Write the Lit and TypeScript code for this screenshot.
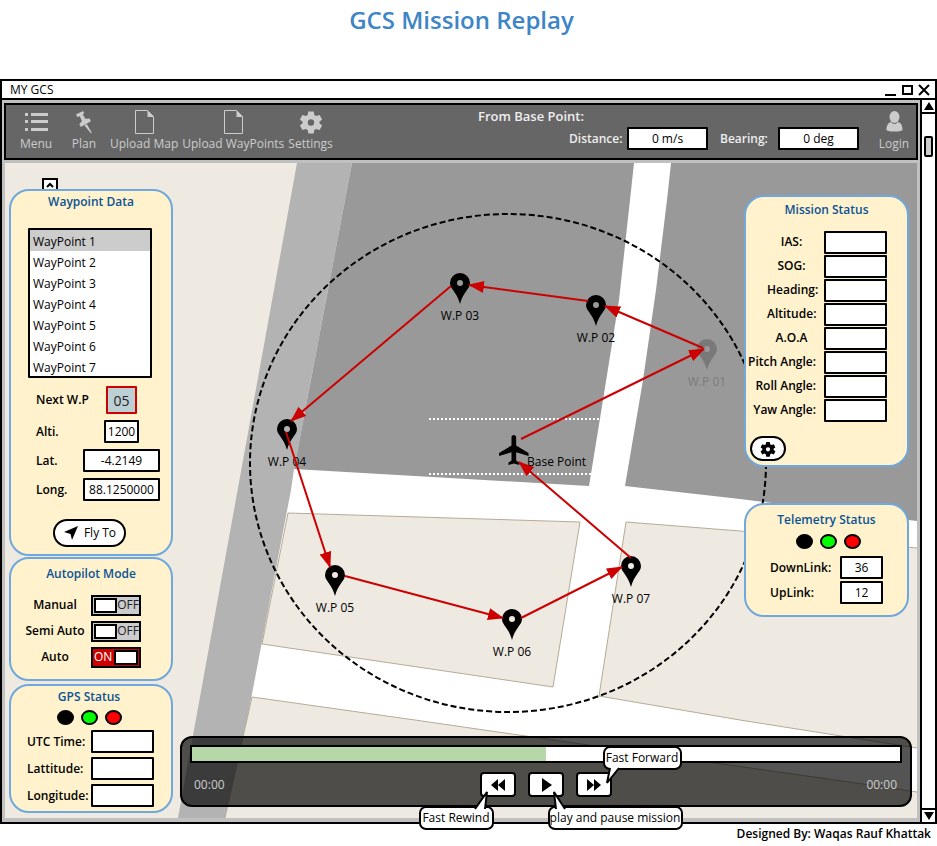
import { LitElement, html, svg, css } from "lit";
import { customElement, state } from "lit/decorators.js";
import { styleMap } from "lit/directives/style-map.js";

const GEAR =
  "M9.300 1.500h5.400l.6 3.500 1.900 1.100 3.400-1.200 2.500 4.500-2.700 2.300v1.600l2.700 2.300-2.500 4.500-3.400-1.200-1.900 1.100-.6 3.500H9.300L8.700 20l-1.900-1.100-3.400 1.200L.9 15.600l2.700-2.300v-1.600L.9 9.400l2.500-4.500 3.400 1.200L8.700 5zM12 9.300a3.200 3.200 0 1 0 0 6.400 3.200 3.200 0 0 0 0-6.400z";

const icon = (name: string) => {
  switch (name) {
    case "menu":
      return svg`<path fill="currentColor" d="M1 3h3v3H1zM7 3h17v3H7zM1 10h3v3H1zM7 10h17v3H7zM1 18h3v3H1zM7 18h17v3H7z"/>`;
    case "pin":
      return svg`<path fill="currentColor" d="M4 4.500 11 1l1.200 2.200-1.400 1.400 2.600 4.200 4-.2 1.600 2.600-5 2.800-5.200 3-1.500-2.800 2.600-3.300L7.800 6.200 5.300 7zM12.500 15.500l2.200-1.400 5 8.500-.6.8z"/>`;
    case "file":
      return svg`<path fill="none" stroke="currentColor" d="M3.500.5h12l6 6v17h-18z"/><path fill="currentColor" d="M15.500.5 22 7h-6.500z"/>`;
    case "gear":
      return svg`<path fill="currentColor" fill-rule="evenodd" d=${GEAR}/>`;
    default:
      return svg`<ellipse cx="12.500" cy="7" rx="5" ry="6" fill="currentColor"/><path fill="currentColor" d="M4.500 20c0-4 1-7 4.500-8 2 2.500 5 2.500 7 0 3.500 1 4.500 4 4.500 8-2 2-14 2-16 0z"/>`;
  }
};

const TOOLS = [
  ["menu", "Menu"],
  ["pin", "Plan"],
  ["file", "Upload Map"],
  ["file", "Upload WayPoints"],
  ["gear", "Settings"],
];

const PINS: [number, number, string][] = [
  [707, 349, "W.P 01"],
  [596, 305, "W.P 02"],
  [460, 283, "W.P 03"],
  [287, 429, "W.P 04"],
  [335, 575, "W.P 05"],
  [512, 619, "W.P 06"],
  [631, 566, "W.P 07"],
];

const LEGS = [
  "M521 439 704 349",
  "M703 348 605 306",
  "M588 301 469 285",
  "M451 286 291 421",
  "M286 432 330 567",
  "M345 576 503 618",
  "M521 618 622 567",
  "M631 558 519 462",
];

const MISSION: [string, boolean][] = [
  ["IAS:", false],
  ["SOG:", false],
  ["Heading:", false],
  ["Altitude:", false],
  ["A.O.A", false],
  ["Pitch Angle:", true],
  ["Roll Angle:", true],
  ["Yaw Angle:", true],
];

@customElement("app-root")
export class AppRoot extends LitElement {
  @state() private modes = [
    { name: "Manual", on: false },
    { name: "Semi Auto", on: false },
    { name: "Auto", on: true },
  ];
  @state() private progress = 50;

  static styles = css`
    :host {
      display: block;
      background: #fff;
      color: #000;
      font: 12px/16px "Open Sans", "Noto Sans", sans-serif;
    }
    * {
      box-sizing: border-box;
    }
    button,
    input,
    select {
      font: inherit;
      color: inherit;
      margin: 0;
      padding: 0;
    }
    button {
      cursor: pointer;
    }
    svg {
      display: block;
    }
    h1 {
      margin: 0;
      padding: 4px 14px 0 0;
      height: 79px;
      font-size: 24px;
      line-height: 32px;
      font-weight: 600;
      text-align: center;
      color: #3d85c6;
    }
    .window {
      border: 2px solid #000;
    }
    .titlebar {
      display: flex;
      justify-content: space-between;
      align-items: center;
      height: 19px;
      padding: 0 4px 0 8px;
      border-bottom: 2px solid #000;
    }
    .winbtns {
      display: flex;
      gap: 4px;
    }
    .winbtns button {
      width: 13px;
      height: 15px;
      border: 0;
      background: none;
    }
    .frame {
      display: flex;
      background: #c0c0c0;
    }
    .content {
      flex: 1;
      min-width: 0;
      padding: 3px 2px 4px;
    }
    .scroll {
      width: 15px;
      display: flex;
      flex-direction: column;
      background: #fff;
      border-left: 2px solid #000;
    }
    .scroll button {
      height: 14px;
      border: 0 solid #000;
      background: #fff;
      display: grid;
      place-items: center;
    }
    .scroll .up {
      border-bottom-width: 2px;
    }
    .scroll .down {
      border-top-width: 2px;
    }
    .track {
      flex: 1;
      padding: 22px 2px 0;
    }
    .thumb {
      height: 21px;
      border: 2px solid #000;
      border-radius: 2px;
      background: #ccc;
    }
    .toolbar {
      display: flex;
      height: 57px;
      background: #666;
      border: 2px solid #000;
      color: #ccc;
      padding: 0 0 0 8px;
    }
    .tool {
      display: flex;
      flex-direction: column;
      align-items: center;
      gap: 2px;
      min-width: 44px;
      margin-right: 4px;
      padding: 5px 0 0;
      border: 0;
      background: none;
      white-space: nowrap;
    }
    .tools {
      display: flex;
    }
    .base {
      margin: 2px 0 0 auto;
      font-weight: 600;
      color: #eee;
    }
    .base-title {
      font-size: 13px;
      line-height: 18px;
    }
    .readouts {
      display: flex;
      gap: 12px;
      padding: 2px 0 0 91px;
    }
    .readouts label {
      display: flex;
      align-items: center;
      justify-content: space-between;
      width: 139px;
    }
    .login {
      margin: 0 0 0 13px;
    }
    .field {
      height: 23px;
      width: 63px;
      border: 2px solid #000;
      border-radius: 1px;
      background: #fff;
      color: #000;
      text-align: center;
      font-weight: 400;
    }
    .w81 {
      width: 81px;
    }
    .w77 {
      width: 77px;
    }
    .w43 {
      width: 43px;
    }
    .w35 {
      width: 35px;
    }
    .next {
      width: 31px;
      height: 28px;
      border-color: #c00;
      background: #bccfd4;
      color: #222;
      font-size: 14px;
    }
    .map {
      position: relative;
      margin: 3px 1px 0;
      display: grid;
      grid-template-columns: 164px minmax(0, 1fr) 165px;
      grid-template-rows: 1fr auto;
      column-gap: 7px;
      padding: 15px 5px 5px 4px;
    }
    .canvas {
      position: absolute;
      inset: 0;
      width: 100%;
      height: 100%;
    }
    .left {
      grid-row: 1 / 3;
      position: relative;
    }
    .right {
      grid-column: 3;
      position: relative;
      margin: 17px 3px 0 -3px;
    }
    .collapse {
      display: block;
      width: 16px;
      height: 13px;
      margin: 0 0 -2px 33px;
      border: 2px solid #000;
      background: #fff;
    }
    .panel {
      position: relative;
      background: #fff2cc;
      border: 2px solid #6fa8dc;
      border-radius: 20px;
      padding: 3px 0 0;
      font-weight: 600;
    }
    h2 {
      margin: 0;
      font-size: 12px;
      line-height: 16px;
      font-weight: 600;
      text-align: center;
      color: #0b5394;
    }
    .waypoints {
      height: 367px;
    }
    .list {
      display: block;
      width: 124px;
      height: 150px;
      margin: 18px 0 8px 17px;
      border: 2px solid #000;
      border-radius: 1px;
      background: #fff;
      outline: none;
      overflow: hidden;
      font-weight: 400;
    }
    .list option {
      height: 21px;
      min-height: 0;
      padding: 3px 3px 0;
      color: #000;
    }
    .list option:checked {
      background: #ccc linear-gradient(#ccc, #ccc);
      color: #000;
    }
    .row {
      display: grid;
      grid-template-columns: 47px 77px;
      align-items: center;
      margin: 0 0 6px 25px;
      white-space: nowrap;
    }
    .row .field {
      justify-self: center;
    }
    .pill {
      display: flex;
      align-items: center;
      justify-content: center;
      border: 2px solid #000;
      border-radius: 14px;
      background: #fff;
      font-weight: 400;
    }
    .fly {
      width: 73px;
      height: 28px;
      gap: 5px;
      margin: 18px 0 0 42px;
    }
    .autopilot {
      margin-top: 1px;
      height: 124px;
      padding-top: 7px;
    }
    .gps {
      margin-top: 3px;
      height: 129px;
    }
    .mode {
      display: flex;
      align-items: center;
      height: 26px;
      margin-left: 12px;
    }
    .autopilot h2 {
      margin-bottom: 10px;
    }
    .mode-name {
      width: 68px;
      padding-right: 4px;
      display: flex;
      justify-content: center;
      white-space: nowrap;
    }
    .switch {
      position: relative;
      display: flex;
      align-items: center;
      justify-content: space-between;
      width: 50px;
      height: 21px;
      padding: 0 0 0 1px;
      border: 2px solid #000;
      background: #ccc;
      color: #20202a;
      font-weight: 400;
    }
    .switch input {
      position: absolute;
      inset: 0;
      width: 100%;
      height: 100%;
      opacity: 0;
    }
    .knob {
      width: 24px;
      height: 15px;
      border: 2px solid #000;
      background: #fff;
    }
    .switch.on {
      flex-direction: row-reverse;
      background: #c00;
      color: #fff;
      padding: 0 1px;
    }
    .lights {
      display: flex;
      justify-content: center;
      gap: 7px;
      margin: 5px 0;
    }
    .gps h2,
    .gps .lights {
      padding-right: 4px;
    }
    .light {
      width: 17px;
      height: 15px;
      border: 2px solid #000;
      border-radius: 50%;
      background: #000;
    }
    .green {
      background: #0f0;
    }
    .red {
      background: #f00;
    }
    .gpsrow {
      display: grid;
      grid-template-columns: 64px 63px;
      align-items: center;
      margin: 0 0 4px 16px;
      white-space: nowrap;
    }
    .mission {
      height: 272px;
      padding-top: 5px;
    }
    .mission h2 {
      margin-bottom: 12px;
    }
    .mrow {
      display: grid;
      grid-template-columns: 70px 63px;
      column-gap: 8px;
      align-items: center;
      height: 24px;
      white-space: nowrap;
    }
    .mrow .cap {
      text-align: center;
      padding-left: 21px;
    }
    .mrow .wide {
      display: flex;
      justify-content: flex-end;
      padding: 0;
    }
    .opts {
      width: 36px;
      height: 25px;
      margin: 14px 0 0 4px;
    }
    .telemetry {
      margin-top: 36px;
      height: 114px;
      padding-top: 7px;
    }
    .trow {
      display: grid;
      grid-template-columns: 70px 43px;
      align-items: center;
      margin: 0 0 2px 24px;
    }
    .telemetry .lights {
      margin: 6px 0 7px;
      padding-left: 4px;
    }
    .player {
      position: relative;
      grid-column: 2 / 4;
      margin: 0 0 6px;
      height: 71px;
      padding: 7px 8px;
      border: 2px solid #000;
      border-radius: 12px;
      background: rgba(0, 0, 0, 0.67);
      color: #ccc;
    }
    .bar {
      height: 18px;
      border: 2px solid #000;
      background: #fff;
    }
    .done {
      height: 100%;
      background: #b6d7a8;
    }
    .controls {
      display: grid;
      grid-template-columns: 1fr auto 1fr;
      align-items: center;
      margin-top: 9px;
      padding: 0 5px 0 4px;
    }
    .controls time:last-child {
      text-align: right;
    }
    .btns {
      display: flex;
      gap: 12px;
    }
    .ctl {
      position: relative;
      width: 36px;
      height: 25px;
      display: grid;
      place-items: center;
      border: 2px solid #000;
      border-radius: 4px;
      background: #fff;
      color: #000;
    }
    .tip {
      position: absolute;
      z-index: 1;
      height: 24px;
      line-height: 20px;
      border: 2px solid #000;
      border-radius: 7px;
      background: #fff;
      white-space: nowrap;
      text-align: center;
    }
    .tail {
      position: absolute;
      overflow: visible;
    }
    .tip-rw {
      width: 75px;
      top: 32px;
      left: -63px;
    }
    .tip-rw .tail {
      left: 53px;
      top: -19px;
    }
    .tip-play {
      width: 135px;
      top: 32px;
      left: 18px;
    }
    .tip-play .tail {
      left: 2px;
      top: -19px;
    }
    .tip-ff {
      width: 79px;
      top: -28px;
      left: 25px;
    }
    .tip-ff .tail {
      left: 1px;
      top: 20px;
    }
    footer {
      padding: 2px 6px 0;
      text-align: right;
      font-weight: 600;
    }
    .label {
      font-size: 12px;
      text-anchor: middle;
    }
    .start {
      text-anchor: start;
    }
  `;

  private toggle(i: number) {
    this.modes = this.modes.map((m, n) => (n === i ? { ...m, on: !m.on } : m));
  }

  private renderMap() {
    return html`<svg class="canvas" viewBox="5 163 912 655" preserveAspectRatio="xMidYMid slice" role="img" aria-label="Mission map">
      <defs>
        <marker id="head" markerUnits="userSpaceOnUse" markerWidth="18" markerHeight="14" refX="15" refY="6" orient="auto">
          <path d="M0 0 16 6 0 12z" fill="#c00" />
        </marker>
      </defs>
      <rect x="-400" y="0" width="1800" height="1000" fill="#eee9e1" />
      <path fill="#fff" d="M352 163H1400V818H225z" />
      <path fill="#b3b3b3" d="M297 163H352L294 469 291 490 247 720 225 818H178L240 477z" />
      <path fill="#999" d="M352 163H634L630 200 619 300 603 400 589 486 294 469z" />
      <path fill="#999" d="M671 163H1400V578L917 521 740 499 625 486 643 380 656 290 667 200z" />
      <g fill="#eee9e1" stroke="#b8aa98">
        <path d="M288 513 580 522 553 687 262 644z" />
        <path d="M626 522 740 531 917 548 1400 594V826L917 748 740 720 599 696z" />
        <path d="M252 697 415 720 560 741 870 785 917 792 1400 860V1000H225V818z" />
      </g>
      <path d="M429 419H603M429 474H603" stroke="#fff" stroke-width="2" stroke-dasharray="2 2" />
      <ellipse cx="508" cy="463" rx="258" ry="249" fill="none" stroke="#000" stroke-width="2" stroke-dasharray="6 3" />
      ${PINS.map(
        ([x, y, name], i) => svg`<g transform="translate(${x} ${y})" opacity=${i === 0 ? 0.2 : 1}>
          <path fill-rule="evenodd" d="M0-10A10 10 0 0 1 10 0C10 6 3 9 0 21-3 9-10 6-10 0A10 10 0 0 1 0-10zM0-3A3 3 0 0 0 0 3 3 3 0 0 0 0-3z"/>
          <text class="label" y="37">${name}</text>
        </g>`,
      )}
      <path
        transform="translate(496 432) scale(1.55 1.5)"
        d="M21 16v-2l-8-5V3.500c0-.83-.67-1.500-1.500-1.500S10 2.670 10 3.500V9l-8 5v2l8-2.500V19l-2 1.500V22l3.500-1 3.500 1v-1.500L13 19v-5.500l8 2.500z"
      />
      <text class="label start" x="527" y="466">Base Point</text>
      ${LEGS.map((d) => svg`<path d=${d} stroke="#c00" stroke-width="2" marker-end="url(#head)"/>`)}
    </svg>`;
  }

  private renderLights() {
    return html`<div class="lights">
      <span class="light"></span><span class="light green"></span><span class="light red"></span>
    </div>`;
  }

  render() {
    return html`
      <h1>GCS Mission Replay</h1>
      <main class="window">
        <header class="titlebar">
          <span>MY GCS</span>
          <div class="winbtns">
            <button aria-label="Minimize"><svg width="13" height="15"><path d="M1 13H12" stroke="#000" stroke-width="2" /></svg></button>
            <button aria-label="Maximize"><svg width="13" height="15"><path d="M2 4H11V12H2z" fill="none" stroke="#000" stroke-width="2" /></svg></button>
            <button aria-label="Close"><svg width="13" height="15"><path d="M1 3 11 13M11 3 1 13" stroke="#000" stroke-width="2" /></svg></button>
          </div>
        </header>
        <div class="frame">
          <div class="content">
            <nav class="toolbar">
              <div class="tools">
                ${TOOLS.map(
                  ([i, t]) => html`<button class="tool"><svg width="24" height="24" viewBox="0 0 24 24">${icon(i)}</svg>${t}</button>`,
                )}
              </div>
              <div class="base">
                <div class="base-title">From Base Point:</div>
                <div class="readouts">
                  <label>Distance: <input class="field w81" value="0 m/s" /></label>
                  <label>Bearing: <input class="field w81" value="0 deg" /></label>
                </div>
              </div>
              <button class="tool login"><svg width="24" height="24" viewBox="0 0 24 24">${icon("user")}</svg>Login</button>
            </nav>
            <section class="map">
              ${this.renderMap()}
              <div class="left">
                <button class="collapse" aria-label="Collapse">
                  <svg width="12" height="9"><path d="M3 7 6 4 9 7" fill="none" stroke="#000" stroke-width="2" /></svg>
                </button>
                <section class="panel waypoints">
                  <h2>Waypoint Data</h2>
                  <select class="list" size="7" aria-label="Waypoints">
                    ${[1, 2, 3, 4, 5, 6, 7].map((n) => html`<option ?selected=${n === 1}>WayPoint ${n}</option>`)}
                  </select>
                  <label class="row">Next W.P <input class="field next" value="05" /></label>
                  <label class="row">Alti. <input class="field w35" value="1200" /></label>
                  <label class="row">Lat. <input class="field w77" value="-4.2149" /></label>
                  <label class="row">Long. <input class="field w77" value="88.1250000" /></label>
                  <button class="pill fly">
                    <svg width="16" height="16"><path d="M15 1 9 15 7.500 9 1 7z" /></svg>Fly To
                  </button>
                </section>
                <section class="panel autopilot">
                  <h2>Autopilot Mode</h2>
                  ${this.modes.map(
                    (m, i) => html`<label class="mode">
                      <span class="mode-name">${m.name}</span>
                      <span class="switch ${m.on ? "on" : ""}">
                        <input type="checkbox" .checked=${m.on} @change=${() => this.toggle(i)} />
                        <span class="knob"></span><span>${m.on ? "ON" : "OFF"}</span>
                      </span>
                    </label>`,
                  )}
                </section>
                <section class="panel gps">
                  <h2>GPS Status</h2>
                  ${this.renderLights()}
                  ${["UTC Time:", "Lattitude:", "Longitude:"].map(
                    (t) => html`<label class="gpsrow"><span>${t}</span><input class="field" /></label>`,
                  )}
                </section>
              </div>
              <div class="right">
                <section class="panel mission">
                  <h2>Mission Status</h2>
                  ${MISSION.map(
                    ([t, wide]) => html`<label class="mrow"><span class="cap ${wide ? "wide" : ""}">${t}</span><input class="field" /></label>`,
                  )}
                  <button class="pill opts" aria-label="Options">
                    <svg width="16" height="16" viewBox="0 0 24 24">${icon("gear")}</svg>
                  </button>
                </section>
                <section class="panel telemetry">
                  <h2>Telemetry Status</h2>
                  ${this.renderLights()}
                  <label class="trow">DownLink: <input class="field w43" value="36" /></label>
                  <label class="trow">UpLink: <input class="field w43" value="12" /></label>
                </section>
              </div>
              <section class="player">
                <div class="bar"><div class="done" style=${styleMap({ width: `${this.progress}%` })}></div></div>
                <div class="controls">
                  <time>00:00</time>
                  <div class="btns">
                    <button class="ctl" aria-label="Rewind">
                      <svg width="16" height="14"><path d="M8 1V13L1 7zM15 1V13L8 7z" /></svg>
                      <span class="tip tip-rw"><svg class="tail" width="14" height="20"><path d="M1 20 13 3 11 20" fill="#fff" stroke="#000" stroke-width="2" /></svg>Fast Rewind</span>
                    </button>
                    <button class="ctl" aria-label="Play">
                      <svg width="16" height="14"><path d="M4 0V14L14 7z" /></svg>
                      <span class="tip tip-play"><svg class="tail" width="14" height="20"><path d="M4 20 2 3 13 20" fill="#fff" stroke="#000" stroke-width="2" /></svg>play and pause mission</span>
                    </button>
                    <button class="ctl" aria-label="Forward">
                      <svg width="16" height="14"><path d="M1 1V13L8 7zM8 1V13L15 7z" /></svg>
                      <span class="tip tip-ff"><svg class="tail" width="14" height="16"><path d="M4 0 1 15 13 0" fill="#fff" stroke="#000" stroke-width="2" /></svg>Fast Forward</span>
                    </button>
                  </div>
                  <time>00:00</time>
                </div>
              </section>
            </section>
          </div>
          <div class="scroll">
            <button class="up" aria-label="Scroll up"><svg width="10" height="8"><path d="M0 8 5 0 10 8z" /></svg></button>
            <div class="track"><div class="thumb"></div></div>
            <button class="down" aria-label="Scroll down"><svg width="10" height="8"><path d="M0 0 5 8 10 0z" /></svg></button>
          </div>
        </div>
      </main>
      <footer>Designed By: Waqas Rauf Khattak</footer>
    `;
  }
}
